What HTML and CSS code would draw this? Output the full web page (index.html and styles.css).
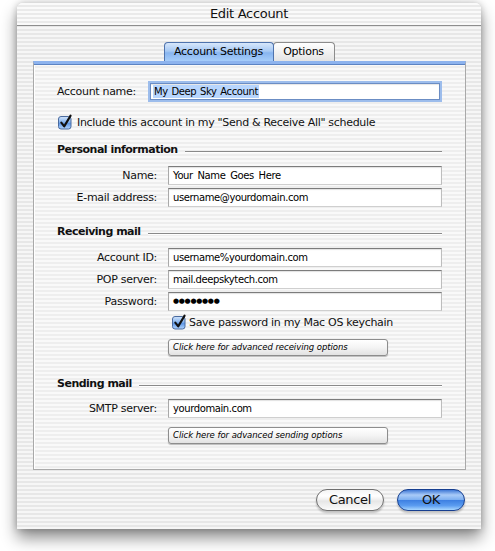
FILE: index.html
```
<!DOCTYPE html>
<html>
<head>
<meta charset="utf-8">
<title>Edit Account</title>
<link rel="stylesheet" href="styles.css">
</head>
<body>
<div class="window">
  <div class="titlebar">Edit Account</div>
  <div class="content">
    <div class="tabs">
      <div class="tab tab-active">Account Settings</div>
      <div class="tab tab-options">Options</div>
    </div>
    <div class="panel">
      <div class="acct-row">
        <span class="acct-label">Account name:</span>
        <span class="field field-focus"><span class="sel">My Deep Sky Account</span></span>
      </div>
      <div class="check-row">
        <svg class="cb" width="16" height="16" viewBox="0 0 16 16">
          <defs><linearGradient id="cbg1" x1="0" y1="0" x2="0" y2="1"><stop offset="0" stop-color="#d3e5fb"/><stop offset=".45" stop-color="#86b4ef"/><stop offset=".55" stop-color="#5f97e6"/><stop offset="1" stop-color="#b3d6ff"/></linearGradient></defs>
          <rect x="1.5" y="2.5" width="12.5" height="12.5" rx="2.5" fill="url(#cbg1)" stroke="#4a6a9e"/>
          <path d="M4.3 8.6 L7.2 12.4 L13.6 1.6" fill="none" stroke="#111" stroke-width="2.1" stroke-linecap="round" stroke-linejoin="round"/>
        </svg>
        <span class="check-text">Include this account in my "Send &amp; Receive All" schedule</span>
      </div>

      <div class="section section-first"><span>Personal information</span><i class="rule"></i></div>
      <div class="frow frow-first"><span class="lbl">Name:</span><span class="field">Your Name Goes Here</span></div>
      <div class="frow"><span class="lbl">E-mail address:</span><span class="field">username@yourdomain.com</span></div>

      <div class="section"><span>Receiving mail</span><i class="rule"></i></div>
      <div class="frow frow-first"><span class="lbl">Account ID:</span><span class="field">username%yourdomain.com</span></div>
      <div class="frow"><span class="lbl">POP server:</span><span class="field">mail.deepskytech.com</span></div>
      <div class="frow"><span class="lbl">Password:</span><span class="field field-pw">&#9679;&#9679;&#9679;&#9679;&#9679;&#9679;&#9679;&#9679;</span></div>
      <div class="check-row check-sub">
        <svg class="cb" width="16" height="16" viewBox="0 0 16 16">
          <defs><linearGradient id="cbg2" x1="0" y1="0" x2="0" y2="1"><stop offset="0" stop-color="#d3e5fb"/><stop offset=".45" stop-color="#86b4ef"/><stop offset=".55" stop-color="#5f97e6"/><stop offset="1" stop-color="#b3d6ff"/></linearGradient></defs>
          <rect x="1.5" y="2.5" width="12.5" height="12.5" rx="2.5" fill="url(#cbg2)" stroke="#4a6a9e"/>
          <path d="M4.3 8.6 L7.2 12.4 L13.6 1.6" fill="none" stroke="#111" stroke-width="2.1" stroke-linecap="round" stroke-linejoin="round"/>
        </svg>
        <span class="check-text">Save password in my Mac OS keychain</span>
      </div>
      <div class="adv">Click here for advanced receiving options</div>

      <div class="section section-send"><span>Sending mail</span><i class="rule"></i></div>
      <div class="frow frow-smtp"><span class="lbl">SMTP server:</span><span class="field">yourdomain.com</span></div>
      <div class="adv">Click here for advanced sending options</div>
    </div>
    <div class="buttons">
      <div class="btn btn-cancel">Cancel</div>
      <div class="btn btn-ok">OK</div>
    </div>
  </div>
</div>
</body>
</html>
```
FILE: styles.css
```
html, body {
  margin: 0;
  padding: 0;
  background: #ffffff;
}
body {
  font-family: "DejaVu Sans", "Noto Sans", sans-serif;
  color: #000;
  width: 495px;
  height: 551px;
  overflow: hidden;
}
.window {
  margin: 3px 0 0 17px;
  width: 464px;
  border-radius: 6px 6px 1px 1px;
  background: repeating-linear-gradient(to bottom, #f6f6f6 0 2px, #e7e7e7 2px 4px);
  box-shadow: 0 9px 16px rgba(0,0,0,0.45), 0 0 7px rgba(0,0,0,0.22);
  display: flex;
  flex-direction: column;
}
.titlebar {
  height: 22px;
  line-height: 22px;
  border-bottom: 1px solid #8e8e8e;
  text-align: center;
  font-size: 13px;
  letter-spacing: -0.3px;
  color: #111;
  border-radius: 6px 6px 0 0;
  background: repeating-linear-gradient(to bottom, #fafafa 0 2px, #eaeaea 2px 4px);
}
.content {
  padding: 16px 15px 18px 16px;
  display: flex;
  flex-direction: column;
}
.tabs {
  display: flex;
  justify-content: center;
  height: 19px;
  padding-right: 1px;
}
.tab {
  box-sizing: border-box;
  height: 19px;
  font-size: 11px;
  letter-spacing: -0.25px;
  line-height: 18px;
  text-align: center;
  border: 1px solid #8c8c8c;
  border-bottom: none;
  border-radius: 4px 4px 0 0;
}
.tab-active {
  width: 110px;
  border-color: #4f73ad;
  background: linear-gradient(to bottom, #d7e7fb 0%, #a7c9f4 45%, #88b5f0 55%, #a6cdfa 100%);
  position: relative;
  z-index: 1;
}
.tab-options {
  width: 62px;
  margin-left: -1px;
  background: linear-gradient(to bottom, #ffffff 0%, #f1f1f1 50%, #e4e4e4 100%);
}
.panel {
  border: 1px solid #a9a9a9;
  border-top: 3px solid #8db3ee;
  box-shadow: inset 0 1px 0 #5c84c4, inset 1px 0 0 #fff;
  background: repeating-linear-gradient(to bottom, #f9f9f9 0 2px, #eeeeee 2px 4px);
  padding: 0 23px 25px 23px;
  display: flex;
  flex-direction: column;
  font-size: 11px;
  letter-spacing: -0.3px;
  color: #111;
}
.acct-row {
  display: flex;
  align-items: center;
  height: 21px;
  margin-top: 17px;
}
.acct-label {
  width: 93px;
  flex: none;
}
.field {
  box-sizing: border-box;
  flex: 1;
  height: 19px;
  background: #fff;
  border: 1px solid;
  border-color: #7c7c7c #bdbdbd #cfcfcf #a9a9a9;
  box-shadow: inset 0 1px 1px rgba(0,0,0,0.12);
  font-size: 10px;
  letter-spacing: -0.4px;
  word-spacing: 2px;
  line-height: 17px;
  padding-left: 4px;
  white-space: nowrap;
  overflow: hidden;
  color: #000;
}
.field-focus {
  height: 17px;
  line-height: 15px;
  margin-right: 2px;
  padding-left: 2px;
  word-spacing: 1px;
  border-color: #6b8dc4;
  box-shadow: 0 0 0 2px #9dbdec, inset 0 1px 1px rgba(0,0,0,0.1);
}
.sel {
  background: #b7d5fd;
  padding: 1px;
}
.field-pw {
  font-size: 7px;
  letter-spacing: -0.3px;
  font-weight: bold;
}
.check-row {
  display: flex;
  align-items: center;
  height: 15px;
  margin-top: 13px;
}
.cb {
  flex: none;
  margin-top: -2px;
}
.check-text {
  margin-left: 4px;
}
.check-sub {
  margin-left: 114px;
  margin-top: 4px;
}
.check-sub .check-text {
  margin-left: 2px;
}
.section {
  display: flex;
  align-items: center;
  height: 14px;
  margin-top: 17px;
  font-weight: bold;
  letter-spacing: -0.5px;
}
.section-first {
  margin-top: 12px;
}
.section-send {
  margin-top: 20px;
}
.rule {
  flex: 1;
  height: 0;
  border-top: 1px solid #8a8a8a;
  border-bottom: 1px solid #ffffff;
  margin: 5px 0 0 7px;
}
.frow {
  display: flex;
  align-items: center;
  height: 19px;
  margin-top: 3px;
}
.frow-first {
  margin-top: 10px;
}
.frow-smtp {
  margin-top: 9px;
}
.lbl {
  width: 100px;
  flex: none;
  text-align: right;
  margin-right: 11px;
  white-space: nowrap;
}
.adv {
  box-sizing: border-box;
  width: 220px;
  height: 17px;
  margin: 9px 0 0 111px;
  border: 1px solid #8d8d8d;
  border-radius: 3px;
  background: linear-gradient(to bottom, #ffffff 0%, #f4f4f4 50%, #e2e2e2 100%);
  box-shadow: 0 1px 1px rgba(0,0,0,0.25);
  font-size: 8.5px;
  font-style: italic;
  letter-spacing: -0.05px;
  line-height: 15px;
  padding-left: 4px;
  white-space: nowrap;
  color: #000;
}
.buttons {
  display: flex;
  justify-content: flex-end;
  margin: 19px 1px 0 0;
}
.btn {
  box-sizing: border-box;
  width: 68px;
  height: 22px;
  border-radius: 11px;
  font-size: 13px;
  letter-spacing: -0.3px;
  line-height: 20px;
  text-align: center;
  color: #111;
  box-shadow: 0 2px 2px rgba(0,0,0,0.22);
}
.btn-cancel {
  border: 1px solid #6f6f6f;
  background: linear-gradient(to bottom, #f4f4f4 0%, #ffffff 30%, #eeeeee 50%, #e6e6e6 55%, #fbfbfb 100%);
}
.btn-ok {
  margin-left: 13px;
  border: 1px solid #173f8f;
  background: linear-gradient(to bottom, #3f78d6 0%, #a9cbf8 25%, #7eb0f1 48%, #3e80e2 52%, #5b9cf0 78%, #a8d6ff 100%);
}
```
